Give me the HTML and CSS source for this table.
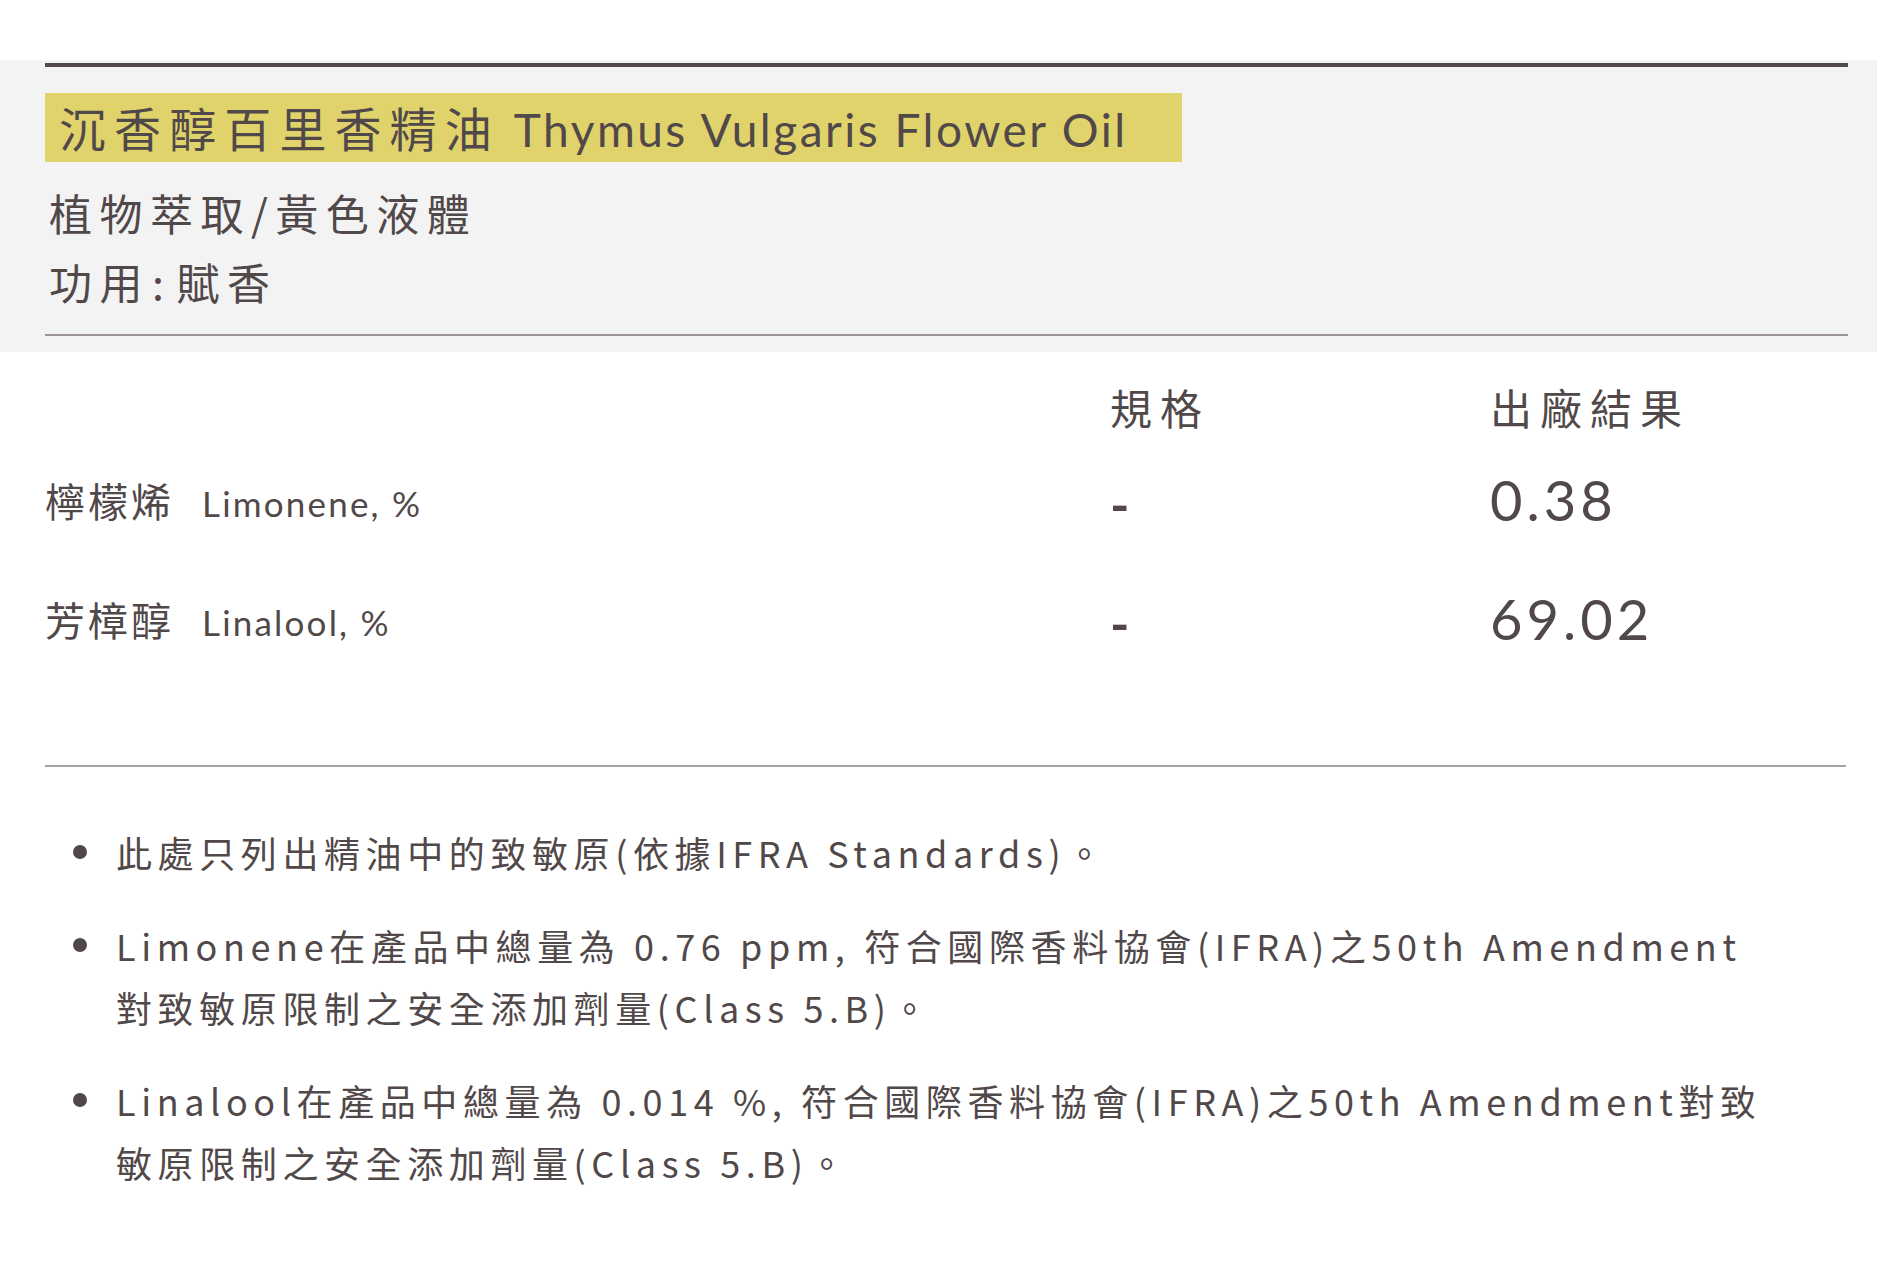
FILE: index.html
```html
<!DOCTYPE html>
<html lang="zh-Hant">
<head>
<meta charset="utf-8">
<title>沉香醇百里香精油</title>
<link rel="stylesheet" href="styles.css">
</head>
<body>
<section class="spec">
  <div class="spec-inner">
    <h1 class="title"><span class="title-zh">沉香醇百里香精油</span><span class="title-en">Thymus Vulgaris Flower Oil</span></h1>
    <p class="meta">植物萃取/黃色液體</p>
    <p class="meta">功用<span class="colon">:</span>賦香</p>
  </div>
</section>
<section class="table">
  <div class="grid">
    <div class="cell head"></div>
    <div class="cell head">規格</div>
    <div class="cell head">出廠結果</div>

    <div class="cell label"><span class="zh">檸檬烯</span><span class="en">Limonene, %</span></div>
    <div class="cell dash">-</div>
    <div class="cell num">0.38</div>

    <div class="cell label"><span class="zh">芳樟醇</span><span class="en">Linalool, %</span></div>
    <div class="cell dash">-</div>
    <div class="cell num">69.02</div>
  </div>
</section>
<ul class="notes">
  <li>此處只列出精油中的致敏原(依據IFRA Standards)。</li>
  <li>Limonene在產品中總量為 0.76 ppm, 符合國際香料協會(IFRA)之50th Amendment<br>對致敏原限制之安全添加劑量(Class 5.B)。</li>
  <li>Linalool在產品中總量為 0.014 %, 符合國際香料協會(IFRA)之50th Amendment對致<br>敏原限制之安全添加劑量(Class 5.B)。</li>
</ul>
</body>
</html>
```
FILE: styles.css
```css
html, body {
  margin: 0;
  padding: 0;
  background: #ffffff;
}
body {
  color: #514849;
  font-family: Lato, "Noto Sans CJK TC", sans-serif;
  width: 1877px;
}
.spec {
  margin-top: 60px;
  background: #f3f3f3;
  padding: 3px 29px 16px 45px;
}
.spec-inner {
  border-top: 4px solid #554a4b;
  border-bottom: 2px solid #9d9593;
  padding: 26px 0 18px;
}
.title {
  display: inline-block;
  margin: 0;
  background: #e0d36c;
  height: 69px;
  line-height: 67px;
  padding: 0 54px 0 14px;
  font-weight: 400;
  white-space: nowrap;
}
.title-zh {
  font-family: "Noto Sans CJK TC", sans-serif;
  font-size: 47px;
  letter-spacing: 8.1px;
}
.title-en {
  font-family: Lato, sans-serif;
  font-size: 46px;
  letter-spacing: 2.5px;
  margin-left: 14px;
}
.meta {
  margin: 0;
  font-family: "Noto Sans CJK TC", sans-serif;
  font-size: 43px;
  line-height: 69px;
  letter-spacing: 7.5px;
  padding-left: 4px;
}
.meta:first-of-type {
  margin-top: 16px;
}
.colon {
  margin: 0 5px 0 2px;
}
.table {
  padding: 20px 31px 0 45px;
}
.grid {
  display: grid;
  grid-template-columns: 1065px 380px 1fr;
  grid-auto-rows: 119px;
  grid-template-rows: 68px;
  align-items: center;
  border-bottom: 2px solid #a7a3a3;
  padding-bottom: 87px;
}
.cell {
  white-space: nowrap;
}
.head {
  font-family: "Noto Sans CJK TC", sans-serif;
  font-size: 42px;
  letter-spacing: 8px;
}
.label .zh {
  font-family: "Noto Sans CJK TC", sans-serif;
  font-size: 40px;
  letter-spacing: 3px;
  margin-right: 28px;
}
.label .en {
  font-family: Lato, sans-serif;
  font-size: 35px;
  letter-spacing: 2.2px;
}
.dash {
  font-family: Lato, sans-serif;
  font-size: 52px;
  font-weight: 700;
  line-height: 1;
  margin-top: 8px;
}
.num {
  font-family: Lato, sans-serif;
  font-size: 56px;
  letter-spacing: 4px;
  margin-top: -1px;
}
.notes {
  list-style: none;
  margin: 54px 0 0;
  padding: 0 0 0 116px;
  font-family: "Noto Sans CJK TC", sans-serif;
  font-size: 36px;
  line-height: 62px;
  letter-spacing: 5.6px;
}
.notes li {
  position: relative;
  margin-bottom: 31px;
  white-space: nowrap;
}
.notes li::before {
  content: "";
  position: absolute;
  left: -43px;
  top: 24px;
  width: 14px;
  height: 14px;
  border-radius: 50%;
  background: #514849;
}
```
